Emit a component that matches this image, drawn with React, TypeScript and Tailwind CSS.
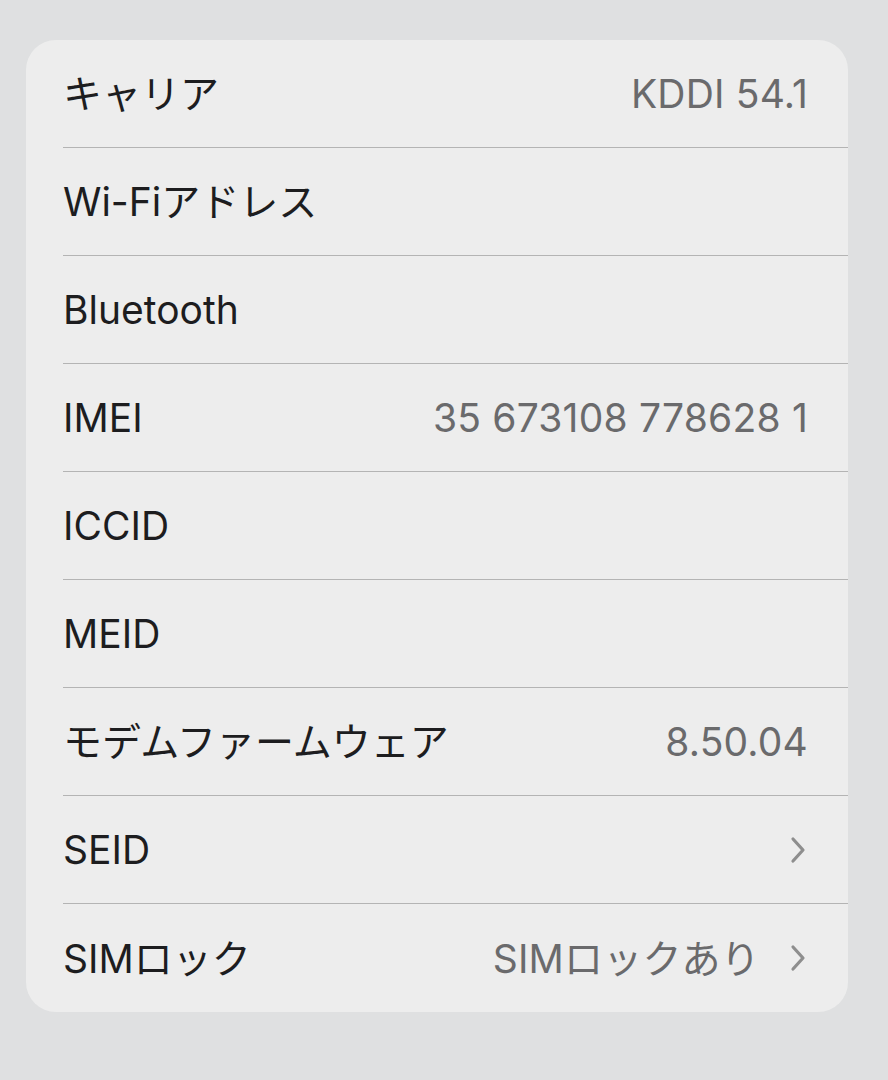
import React from "react";

const rows: { label: string; value?: string; chevron?: boolean }[] = [
  { label: "キャリア", value: "KDDI 54.1" },
  { label: "Wi-Fiアドレス" },
  { label: "Bluetooth" },
  { label: "IMEI", value: "35 673108 778628 1" },
  { label: "ICCID" },
  { label: "MEID" },
  { label: "モデムファームウェア", value: "8.50.04" },
  { label: "SEID", chevron: true },
  { label: "SIMロック", value: "SIMロックあり", chevron: true },
];

function Chevron() {
  return (
    <svg width="16" height="28" viewBox="0 0 16 28" className="ml-[30px] mr-[2px]">
      <path d="M3 3 L13 14 L3 25" fill="none" stroke="#8e8e8e" strokeWidth="3.2" strokeLinecap="round" strokeLinejoin="round" />
    </svg>
  );
}

export default function App() {
  return (
    <div
      className="w-[888px] h-[1080px] bg-[#dfe0e1] pt-[40px] pl-[26px] pr-[40px] overflow-hidden"
      style={{ fontFamily: '"Inter", "Noto Sans CJK JP", sans-serif' }}
    >
      <div className="bg-[#ededed] rounded-[30px] pl-[37px] overflow-hidden">
        {rows.map((r, i) => (
          <div
            key={i}
            className={`flex items-center h-[108px] pr-[40px] ${i < rows.length - 1 ? "border-b border-[#b4b4b4]" : ""}`}
          >
            <span className="text-[39px] text-[#1d1d1f] leading-none whitespace-pre">{r.label}</span>
            <div className="flex-1" />
            {r.value && (
              <span className="text-[39px] text-[#6a6a6c] tracking-[0.2px] leading-none whitespace-pre">{r.value}</span>
            )}
            {r.chevron && <Chevron />}
          </div>
        ))}
      </div>
    </div>
  );
}
